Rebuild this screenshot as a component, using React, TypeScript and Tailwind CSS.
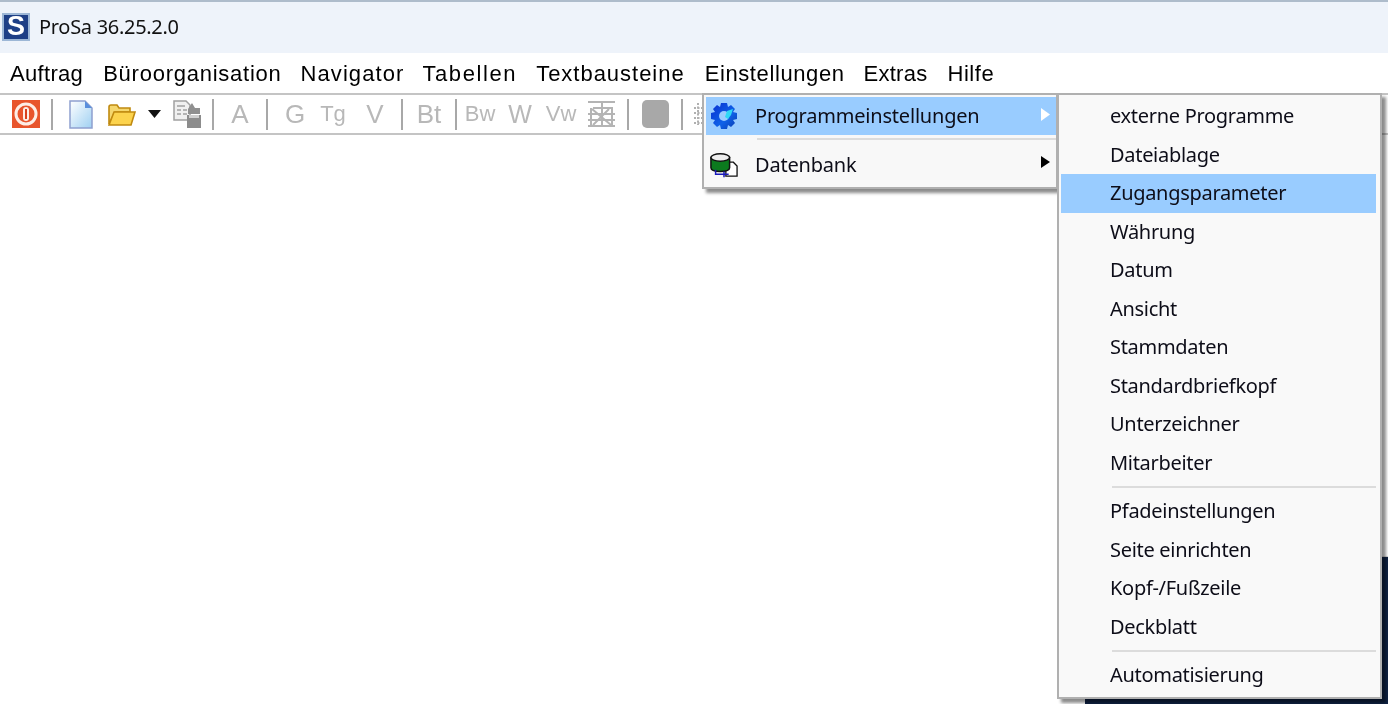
const menus = [
  { t: "Auftrag", c: "tracking-[0.32px]" },
  { t: "Büroorganisation", c: "tracking-[0.75px]" },
  { t: "Navigator", c: "tracking-[1.08px] -ml-[1px]" },
  { t: "Tabellen", c: "tracking-[1.6px] -ml-[2px]" },
  { t: "Textbausteine", c: "tracking-[0.98px] -ml-[1px]" },
  { t: "Einstellungen", c: "tracking-[0.6px]" },
  { t: "Extras", c: "tracking-[0.25px] -ml-[1px]" },
  { t: "Hilfe", c: "tracking-[0.55px]" },
];

function Sep({ ml }: { ml: string }) {
  return <div className={`w-[2px] h-[31px] bg-[#a8a8a8] ${ml}`} />;
}

function Glyph({ t, w, ml, size = "text-[26px]" }: { t: string; w: string; ml: string; size?: string }) {
  return (
    <div className={`${w} ${ml} ${size} h-[30px] flex items-center justify-center text-[#b8b8b8] leading-none font-['Liberation_Sans',sans-serif]`}>
      {t}
    </div>
  );
}

function Row({ label, active }: { label: string; active?: boolean }) {
  return (
    <div className={`h-[38.5px] flex items-center pl-[49px] ${active ? "bg-[#99ccff]" : ""}`}>
      <span className="text-[20px] leading-none tracking-[-0.3px] text-[#0d0d18] font-['Noto_Sans',sans-serif]">{label}</span>
    </div>
  );
}

function Divider({ ml }: { ml: string }) {
  return (
    <div className={`h-[10px] flex items-center ${ml}`}>
      <div className="h-[2px] w-full bg-[#dcdcdc]" />
    </div>
  );
}

function GearIcon() {
  return (
    <svg width="28" height="28" viewBox="0 0 28 28">
      <defs>
        <linearGradient id="g" x1="0" y1="0" x2="1" y2="1">
          <stop offset="0" stopColor="#0a2fd0" />
          <stop offset="0.6" stopColor="#0f62e8" />
          <stop offset="1" stopColor="#0a3ab0" />
        </linearGradient>
      </defs>
      <path fill="url(#g)" d="M11 1h6l1 4 3-2 4 4-2 3 4 1v6l-4 1 2 3-4 4-3-2-1 4h-6l-1-4-3 2-4-4 2-3-4-1v-6l4-1-2-3 4-4 3 2z" />
      <circle cx="14" cy="14" r="5" fill="#99ccff" />
      <path d="M17 9l6-2-2 6-3 4-3-2z" fill="#2fd8f5" />
    </svg>
  );
}

function DbIcon() {
  return (
    <svg width="30" height="26" viewBox="0 0 30 26">
      <path d="M20 10h5l4 4v11h-12v-6" fill="#fff" stroke="#111" strokeWidth="1.4" />
      <path d="M1 5v11c0 3 5 4 10 4s10-1 10-4V5z" fill="#0c7a1e" stroke="#111" strokeWidth="1.6" />
      <ellipse cx="11" cy="5" rx="10" ry="4" fill="#eee" stroke="#111" strokeWidth="1.6" />
      <path d="M6 18v5h13M15 20v6M12 23h8" fill="none" stroke="#1a1ab8" strokeWidth="1.6" />
    </svg>
  );
}

export default function App() {
  return (
    <div className="relative w-[1388px] h-[704px] overflow-hidden bg-white flex flex-col blur-[0.4px]">
      <div className="h-[53px] shrink-0 bg-[#eef3fa] border-t-2 border-[#aebccb] flex items-center pl-[2px] pb-[2px]">
        <div className="w-[28px] h-[28px] bg-[#1e3f86] border-[2px] border-[#9db7d6] flex items-center justify-center">
          <span className="text-white text-[27px] leading-none font-bold font-['Liberation_Sans',sans-serif]">S</span>
        </div>
        <span className="ml-[9px] text-[20px] tracking-[-0.3px] text-[#111] font-['Noto_Sans',sans-serif]">ProSa 36.25.2.0</span>
      </div>

      <div className="h-[40px] shrink-0 flex items-center gap-[20px] pl-[10px] pt-[1px] font-['Liberation_Sans',sans-serif] text-[22px] text-[#000]">
        {menus.map((m) => (
          <span key={m.t} className={`leading-none ${m.c}`}>{m.t}</span>
        ))}
      </div>

      <div className="h-[42px] shrink-0 border-y-2 border-[#c4c4c4] flex items-center">
        <svg className="ml-[12px]" width="28" height="28" viewBox="0 0 28 28">
          <rect width="28" height="28" fill="#e8552c" />
          <circle cx="14" cy="14" r="10" fill="#e8552c" stroke="#fdeee6" strokeWidth="3" />
          <rect x="11" y="7" width="6" height="14" rx="3" fill="#fdeee6" />
          <rect x="13" y="9" width="2" height="10" fill="#d8401c" />
        </svg>
        <Sep ml="ml-[11px]" />
        <svg className="ml-[16px]" width="24" height="29" viewBox="0 0 24 29">
          <defs>
            <linearGradient id="doc" x1="0" y1="0" x2="1" y2="1">
              <stop offset="0" stopColor="#ffffff" />
              <stop offset="1" stopColor="#9fd0f2" />
            </linearGradient>
          </defs>
          <path d="M1 1h15l7 7v20H1z" fill="url(#doc)" stroke="#8fa0cf" strokeWidth="1.5" />
          <path d="M16 1v7h7z" fill="#5a8fdc" />
        </svg>
        <svg className="ml-[15px]" width="28" height="23" viewBox="0 0 28 23">
          <path d="M1 21V4c0-1 1-2 2-2h6l2 3h11v4H7z" fill="#f5d76e" stroke="#c08a10" strokeWidth="1.6" />
          <path d="M1 22l5-13h21l-4 13z" fill="#fcd34d" stroke="#c08a10" strokeWidth="1.6" />
        </svg>
        <svg className="ml-[12px]" width="13" height="8" viewBox="0 0 13 8">
          <path d="M0 0h13L6.5 8z" fill="#111" />
        </svg>
        <svg className="ml-[12px]" width="28" height="28" viewBox="0 0 28 28">
          <path d="M1 1h12l4 4v15H1z" fill="#f0f0f0" stroke="#a0a0a0" strokeWidth="1.5" />
          <path d="M4 6h8M4 10h4M10 10h4M4 14h4M10 14h4" stroke="#a0a0a0" strokeWidth="1.5" />
          <path d="M19 3l3 5h5v6H15v-5z" fill="#8f8f8f" />
          <rect x="14" y="15" width="14" height="13" fill="#8c8c8c" />
          <rect x="16" y="15" width="10" height="3" fill="#cfcfcf" />
        </svg>
        <Sep ml="ml-[11px]" />
        <Glyph t="A" w="w-[24px]" ml="ml-[14px]" />
        <Sep ml="ml-[14px]" />
        <Glyph t="G" w="w-[24px]" ml="ml-[15px]" />
        <Glyph t="Tg" w="w-[26px]" ml="ml-[13px]" size="text-[22px]" />
        <Glyph t="V" w="w-[24px]" ml="ml-[17px]" />
        <Sep ml="ml-[14px]" />
        <Glyph t="Bt" w="w-[28px]" ml="ml-[12px]" />
        <Sep ml="ml-[12px]" />
        <Glyph t="Bw" w="w-[30px]" ml="ml-[8px]" size="text-[22px]" />
        <Glyph t="W" w="w-[28px]" ml="ml-[11px]" size="text-[25px]" />
        <Glyph t="Vw" w="w-[30px]" ml="ml-[12px]" size="text-[22px]" />
        <svg className="ml-[11px]" width="29" height="30" viewBox="0 0 29 30">
          <path d="M1 3h27M6 9h20M1 15h27M1 21h27M1 27h27M4 9v18M15 3v24M25 9v18M5 10l19 16M22 10L6 26" stroke="#b4b4b4" strokeWidth="2" fill="none" />
        </svg>
        <Sep ml="ml-[11px]" />
        <div className="ml-[13px] w-[27px] h-[28px] rounded-[5px] bg-[#a8a8a8]" />
        <Sep ml="ml-[12px]" />
        <svg className="ml-[10px]" width="10" height="24" viewBox="0 0 10 24">
          <path d="M5 1v22M1 6h8M1 11h8M1 16h8M1 21h8" stroke="#b0b0b0" strokeWidth="2" strokeDasharray="2 1.5" fill="none" />
        </svg>
      </div>

      <div className="flex-1 bg-white" />

      {/* desktop visible behind the window */}
      <div className="absolute left-[1382px] top-[556px] w-[6px] h-[148px] bg-[#0f2244] border-t border-[#d8d8d8]" />
      <div className="absolute left-[1085px] top-[699px] w-[303px] h-[5px] bg-[#0f2244]" />

      {/* Einstellungen menu */}
      <div className="absolute left-[702px] top-[93px] w-[356px] h-[96px] bg-[#f8f8f8] border-2 border-[#b0b0b0] pt-[2px] pl-[2px] shadow-[4px_4px_3px_rgba(0,0,0,0.45)]">
        <div className="h-[38px] bg-[#99ccff] flex items-center">
          <div className="ml-[4px] w-[28px] flex justify-center"><GearIcon /></div>
          <span className="ml-[17px] text-[20px] leading-none tracking-[-0.2px] text-[#0d0d18] font-['Noto_Sans',sans-serif]">Programmeinstellungen</span>
          <svg className="ml-auto mr-[6px] mb-[4px]" width="9" height="13" viewBox="0 0 9 13"><path d="M0 0l9 6.5L0 13z" fill="#fff" /></svg>
        </div>
        <div className="h-[11px] pt-[3px] ml-[51px]"><div className="h-[2px] w-full bg-[#dcdcdc]" /></div>
        <div className="h-[38px] flex items-center">
          <div className="ml-[4px] w-[28px] flex justify-center"><DbIcon /></div>
          <span className="ml-[17px] text-[20px] leading-none tracking-[-0.2px] text-[#0d0d18] font-['Noto_Sans',sans-serif]">Datenbank</span>
          <svg className="ml-auto mr-[6px] mb-[6px]" width="9" height="12" viewBox="0 0 9 12"><path d="M0 0l9 6L0 12z" fill="#000" /></svg>
        </div>
      </div>

      {/* Programmeinstellungen submenu */}
      <div className="absolute left-[1057px] top-[93px] w-[325px] h-[606px] bg-[#f9f9f9] border-2 border-[#b0b0b0] pt-[2px] pl-[2px] pr-[4px] shadow-[4px_4px_3px_rgba(0,0,0,0.45)]">
        <Row label="externe Programme" />
        <Row label="Dateiablage" />
        <Row label="Zugangsparameter" active />
        <Row label="Währung" />
        <Row label="Datum" />
        <Row label="Ansicht" />
        <Row label="Stammdaten" />
        <Row label="Standardbriefkopf" />
        <Row label="Unterzeichner" />
        <Row label="Mitarbeiter" />
        <Divider ml="ml-[51px]" />
        <Row label="Pfadeinstellungen" />
        <Row label="Seite einrichten" />
        <Row label="Kopf-/Fußzeile" />
        <Row label="Deckblatt" />
        <Divider ml="ml-[51px]" />
        <Row label="Automatisierung" />
      </div>
    </div>
  );
}
